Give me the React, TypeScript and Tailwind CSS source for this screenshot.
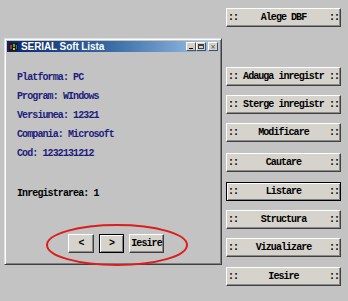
import React from 'react'

const mono = "font-['Liberation_Mono','DejaVu_Sans_Mono',monospace] font-bold text-[10px] tracking-[-0.9px]"

const menu = [
  { label: 'Alege DBF', cls: 'mt-[8px] mb-[40px]' },
  { label: 'Adauga inregistr', cls: '' },
  { label: 'Sterge inregistr', cls: 'mt-[9px]' },
  { label: 'Modificare', cls: 'mt-[9px]' },
  { label: 'Cautare', cls: 'mt-[11px]' },
  { label: 'Listare', cls: 'mt-[10px]', focus: true },
  { label: 'Structura', cls: 'mt-[9px]' },
  { label: 'Vizualizare', cls: 'mt-[9px]' },
  { label: 'Iesire', cls: 'mt-[10px]' },
]

function MenuButton({ label, focus }: { label: string; focus?: boolean }) {
  return (
    <div
      className={`h-[19px] w-[115px] flex items-center justify-between gap-[4px] px-[1px] bg-[#d6d3cc] text-black ${mono} tracking-[-0.95px] ${
        focus
          ? 'border border-black shadow-[inset_1px_1px_#fff,inset_-1px_-1px_#808080]'
          : 'border border-t-white border-l-white border-r-[#404040] border-b-[#404040] shadow-[inset_-1px_-1px_#8a8a8a]'
      }`}
    >
      <span>::</span>
      <span className="whitespace-nowrap">{label}</span>
      <span>::</span>
    </div>
  )
}

function TitleIcon() {
  return (
    <svg width="9" height="8" viewBox="0 0 9 8">
      <rect x="0" y="0" width="9" height="8" fill="#1b1b1b" />
      <rect x="1" y="2" width="2" height="4" fill="#d02020" />
      <rect x="4" y="1" width="2" height="3" fill="#30c030" />
      <rect x="4" y="5" width="2" height="2" fill="#e0c020" />
      <rect x="7" y="2" width="1" height="4" fill="#3060e0" />
    </svg>
  )
}

function CapButton({ children }: { children: React.ReactNode }) {
  return (
    <div className="w-[10px] h-[9px] bg-[#d4d0c8] border border-t-white border-l-white border-r-[#505050] border-b-[#505050] flex items-center justify-center">
      {children}
    </div>
  )
}

function NavButton({ label, w, focus }: { label: string; w: string; focus?: boolean }) {
  return (
    <div
      className={`h-[19px] ${w} flex items-center justify-center bg-[#d6d3cc] text-black ${mono} ${
        focus
          ? 'border border-black shadow-[inset_1px_1px_#fff,inset_-1px_-1px_#808080]'
          : 'border border-t-white border-l-white border-r-[#404040] border-b-[#404040] shadow-[inset_-1px_-1px_#8a8a8a]'
      }`}
    >
      {label}
    </div>
  )
}

export default function App() {
  return (
    <div className="w-[348px] h-[301px] bg-[#c3c3c3] flex overflow-hidden">
      {/* window */}
      <div className="ml-[4px] mt-[38px] w-[218px] h-[227px] relative bg-[#c3c3c3] border border-t-[#e0e0e0] border-l-[#e0e0e0] border-r-[#404040] border-b-[#404040] shadow-[inset_1px_1px_#fff,inset_-1px_-1px_#808080] p-[2px] flex flex-col">
        <div className="h-[11px] flex items-center bg-gradient-to-r from-[#0a246a] via-[#3a6ea5] to-[#a6caf0] pl-[2px] pr-[1px]">
          <TitleIcon />
          <span className="ml-[3px] text-white font-bold text-[10px] leading-none font-['Liberation_Sans',Arial,sans-serif] tracking-[-0.1px]">
            SERIAL Soft Lista
          </span>
          <div className="ml-auto flex">
            <CapButton>
              <div className="w-[4px] h-[1px] bg-black mt-[4px] -ml-[1px]" />
            </CapButton>
            <CapButton>
              <div className="w-[6px] h-[5px] border border-t-2 border-[#404040]" />
            </CapButton>
            <div className="ml-[2px]">
              <CapButton>
                <span className="text-[8px] leading-none text-[#707070] font-bold">×</span>
              </CapButton>
            </div>
          </div>
        </div>

        <div className={`pl-[10px] pt-[16px] leading-[19px] text-[#1c1c7c] ${mono}`}>
          <div>Platforma: PC</div>
          <div>Program: WIndows</div>
          <div>Versiunea: 12321</div>
          <div>Compania: Microsoft</div>
          <div>Cod: 1232131212</div>
          <div className="mt-[21px] text-black">Inregistrarea: 1</div>
        </div>

        <div className="mt-[31px] pl-[61px] flex gap-[5px]">
          <NavButton label="<" w="w-[26px]" />
          <NavButton label=">" w="w-[25px]" focus />
          <NavButton label="Iesire" w="w-[35px]" />
        </div>

        {/* red annotation ellipse */}
        <svg className="absolute left-[40px] top-[184px]" width="144" height="44" viewBox="0 0 144 44">
          <ellipse cx="72" cy="22" rx="70" ry="20" fill="none" stroke="#dd1c1c" strokeWidth="2" />
        </svg>
      </div>

      {/* right menu */}
      <div className="ml-[4px] flex flex-col">
        {menu.map((m) => (
          <div key={m.label} className={m.cls}>
            <MenuButton label={m.label} focus={m.focus} />
          </div>
        ))}
      </div>
    </div>
  )
}
